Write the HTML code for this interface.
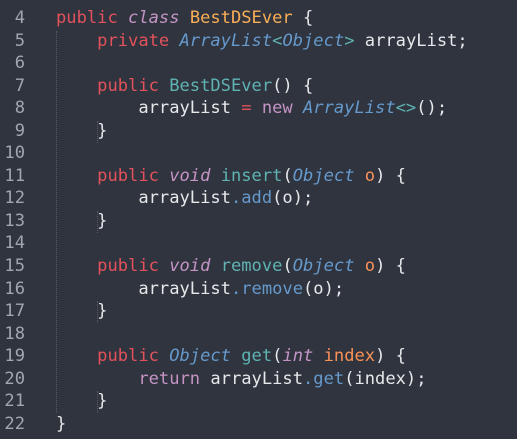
<!DOCTYPE html>
<html><head><style>
body{margin:0;background:#2f343e;width:517px;height:439px;overflow:hidden}
pre{margin:0;position:absolute;top:7px;left:0;font:17.1px/22.55px "DejaVu Sans Mono","Liberation Mono",monospace;color:#e6e8ea}
.n{display:inline-block;width:25px;text-align:right;color:#a0a7b0;margin-right:31px}
.k{color:#e3525c}.i{color:#c594c5;font-style:italic}.p{color:#c594c5}.t{color:#6699cc;font-style:italic}
.c{color:#f9ae57}.m{color:#5fb3b3}.o{color:#f99157}.b{color:#6699cc}
.g{position:absolute;border-left:1px dotted #555c66}
</style></head><body>
<div class="g" style="left:56px;top:31px;height:382px"></div>
<div class="g" style="left:97px;top:121px;height:22px"></div>
<div class="g" style="left:97px;top:211px;height:22px"></div>
<div class="g" style="left:97px;top:301px;height:22px"></div>
<div class="g" style="left:97px;top:391px;height:22px"></div>
<pre><span class="n">4</span><span class="k">public</span> <span class="i">class</span> <span class="c">BestDSEver</span> {
<span class="n">5</span>    <span class="k">private</span> <span class="t">ArrayList</span><span class="m">&lt;</span><span class="t">Object</span><span class="m">&gt;</span> arrayList;
<span class="n">6</span>
<span class="n">7</span>    <span class="k">public</span> <span class="m">BestDSEver</span>() {
<span class="n">8</span>        arrayList <span class="k">=</span> <span class="p">new</span> <span class="t">ArrayList</span><span class="m">&lt;&gt;</span>();
<span class="n">9</span>    }
<span class="n">10</span>
<span class="n">11</span>    <span class="k">public</span> <span class="i">void</span> <span class="m">insert</span>(<span class="t">Object</span> <span class="o">o</span>) {
<span class="n">12</span>        arrayList<span class="b">.add</span>(o);
<span class="n">13</span>    }
<span class="n">14</span>
<span class="n">15</span>    <span class="k">public</span> <span class="i">void</span> <span class="m">remove</span>(<span class="t">Object</span> <span class="o">o</span>) {
<span class="n">16</span>        arrayList<span class="b">.remove</span>(o);
<span class="n">17</span>    }
<span class="n">18</span>
<span class="n">19</span>    <span class="k">public</span> <span class="t">Object</span> <span class="m">get</span>(<span class="i">int</span> <span class="o">index</span>) {
<span class="n">20</span>        <span class="p">return</span> arrayList<span class="b">.get</span>(index);
<span class="n">21</span>    }
<span class="n">22</span>}</pre>
</body></html>
